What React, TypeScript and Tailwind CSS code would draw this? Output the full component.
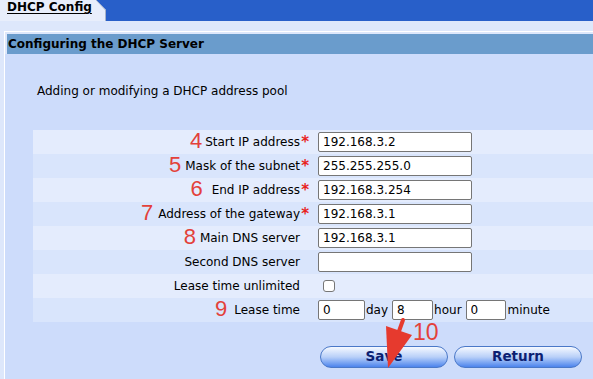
type Row = {
  num?: string;
  gap?: string;
  label: string;
  required?: boolean;
  value?: string;
  kind?: "text" | "check" | "lease";
};

const rows: Row[] = [
  { num: "4", gap: "mr-[3px]", label: "Start IP address", required: true, value: "192.168.3.2" },
  { num: "5", gap: "mr-[4px]", label: "Mask of the subnet", required: true, value: "255.255.255.0" },
  { num: "6", gap: "mr-[9px]", label: "End IP address", required: true, value: "192.168.3.254" },
  { num: "7", gap: "mr-[5px]", label: "Address of the gateway", required: true, value: "192.168.3.1" },
  { num: "8", gap: "mr-[4px]", label: "Main DNS server", value: "192.168.3.1" },
  { label: "Second DNS server", value: "" },
  { label: "Lease time unlimited", kind: "check" },
  { num: "9", gap: "mr-[7px]", label: "Lease time", kind: "lease" },
];

const inputCls =
  "h-[20px] border border-[#767676] rounded-[2px] bg-white px-[4px] text-[12px] text-black outline-none";

function Field({ row }: { row: Row }) {
  if (row.kind === "check") {
    return <span className="ml-[5px] w-[12px] h-[12px] border border-[#767676] rounded-[3px] bg-white" />;
  }
  if (row.kind === "lease") {
    return (
      <div className="flex items-center">
        <input readOnly defaultValue="0" className={`${inputCls} w-[47px]`} />
        <span className="ml-[1px] mr-[4px]">day</span>
        <input readOnly defaultValue="8" className={`${inputCls} w-[41px]`} />
        <span className="ml-[1px] mr-[4px]">hour</span>
        <input readOnly defaultValue="0" className={`${inputCls} w-[40px]`} />
        <span className="ml-[2px]">minute</span>
      </div>
    );
  }
  return <input readOnly defaultValue={row.value} className={`${inputCls} w-[154px]`} />;
}

function SkyButton({ label }: { label: string }) {
  return (
    <button className="w-[128px] h-[22px] rounded-full border border-[#4a78c8] bg-linear-to-b from-[#f6f9ff] via-[#b9d0f8] to-[#4c83ec] text-[13.5px] font-bold text-[#0c1f72] leading-none">
      {label}
    </button>
  );
}

export default function App() {
  return (
    <div className="w-[593px] h-[379px] overflow-hidden bg-[#dde7fb] flex flex-col font-['DejaVu_Sans',sans-serif] text-[12px] text-black">
      {/* tab strip */}
      <div className="h-[21px] flex shrink-0">
        <div className="relative w-[107px] bg-[#e8eefb] pl-[7px] leading-[15px]">
          <span className="font-bold underline underline-offset-[2px]">DHCP Config</span>
          <svg className="absolute right-0 top-0" width="12" height="21" viewBox="0 0 12 21">
            <polygon points="1,0 12,0 12,11" fill="#285fc9" />
            <polyline points="1,0 10.5,10 10.5,21" fill="none" stroke="#a7b3c9" strokeWidth="1" />
            <rect x="11" y="10" width="1" height="11" fill="#285fc9" />
          </svg>
        </div>
        <div className="flex-1 bg-[#285fc9]" />
      </div>
      <div className="h-[10px] shrink-0" />

      {/* panel */}
      <div className="flex-1 ml-[4px] border-l border-t border-white flex flex-col">
        <div className="mt-[2px] ml-[2px] h-[20px] bg-[#6a9ccc] flex items-center pl-[1px] font-bold">
          Configuring the DHCP Server
        </div>
        <div className="relative flex-1 bg-[#cddcfb]">
          <div className="pt-[30px] pl-[32px] leading-[14px]">Adding or modifying a DHCP address pool</div>

          <div className="mt-[32px] ml-[28px] flex flex-col">
            {rows.map((row, i) => (
              <div
                key={row.label}
                className={`h-[24px] flex items-center ${i % 2 === 0 ? "bg-[#e4ecfd]" : "bg-[#d9e5fc]"}`}
              >
                <div className="w-[276px] flex items-center justify-end">
                  {row.num && (
                    <span
                      className={`${row.gap} -mt-[2px] font-['Liberation_Sans',sans-serif] text-[22px] leading-none text-[#e3413a]`}
                    >
                      {row.num}
                    </span>
                  )}
                  <span>{row.label}</span>
                  <span className="w-[9px] self-start pt-[3px] text-[15px] font-bold leading-none text-[#e8231c] text-right">
                    {row.required ? "*" : ""}
                  </span>
                </div>
                <div className="ml-[9px] flex items-center">
                  <Field row={row} />
                </div>
              </div>
            ))}
          </div>

          <div className="mt-[24px] pl-[315px] flex gap-[6px]">
            <SkyButton label="Save" />
            <SkyButton label="Return" />
          </div>

          {/* annotation arrow */}
          <svg className="absolute left-[371px] top-[262px]" width="40" height="56" viewBox="0 0 40 56">
            <line x1="27" y1="4" x2="22" y2="18" stroke="#e63a2e" strokeWidth="4" strokeLinecap="round" />
            <polygon points="10,10 36,19 12,52" fill="#e63a2e" />
          </svg>
          <span className="absolute left-[408px] top-[267px] font-['Liberation_Sans',sans-serif] text-[23px] leading-none text-[#e3413a]">
            10
          </span>
        </div>
      </div>
    </div>
  );
}
